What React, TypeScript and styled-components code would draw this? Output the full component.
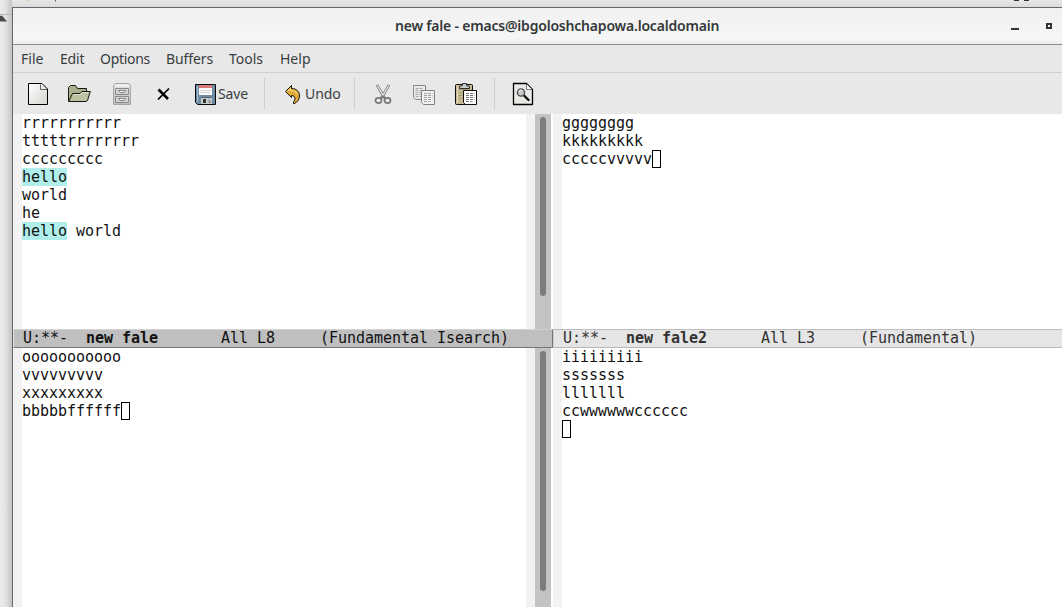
import React from 'react';
import styled, { createGlobalStyle } from 'styled-components';

const GlobalStyle = createGlobalStyle`
  html, body { margin: 0; padding: 0; overflow: hidden; background: #fff; }
  * { box-sizing: border-box; }
`;

const uiFont = `'Noto Sans', 'Open Sans', sans-serif`;
const monoFont = `'DejaVu Sans Mono', 'Liberation Mono', monospace`;

const Desktop = styled.div`
  display: flex;
  width: 1062px;
  height: 607px;
  overflow: hidden;
  background: #e7e7e7;
`;

const BackdropEdge = styled.div`
  flex: none;
  width: 12px;
  height: 607px;
  background: linear-gradient(90deg, #ebebeb 0, #e4e4e4 5px, #c4c4c4 12px);
`;

const EdgeTop = styled.div`
  height: 15px;
  border-bottom: 1px solid #b9b9b9;
`;

const EdgeArrow = styled.svg`
  display: block;
  width: 12px;
  height: 8px;
`;

const Main = styled.div`
  display: flex;
  flex-direction: column;
  flex: 1;
  min-width: 0;
`;

const BackdropTop = styled.div`
  display: flex;
  flex: none;
  height: 7px;
  background: linear-gradient(#e6e6e6, #dcdcdc);
`;

const TopMarks = styled.svg`
  display: block;
  width: 1050px;
  height: 7px;
`;

const Frame = styled.div`
  display: flex;
  flex-direction: column;
  flex: 1;
  min-height: 0;
  border-top: 1px solid #67676a;
  border-left: 1px solid #68686a;
`;

const TitleBar = styled.div`
  display: flex;
  flex: none;
  align-items: center;
  height: 37px;
  padding: 0 10px 0 382px;
  background: linear-gradient(#f1f1f2, #f6f6f6 85%, #ececec);
  border-bottom: 1px solid #8b8b8b;
`;

const Title = styled.div`
  width: 325px;
  font: 600 14px/20px ${uiFont};
  letter-spacing: -0.2px;
  color: #35393a;
  white-space: nowrap;
`;

const WindowButtons = styled.svg`
  width: 44px;
  height: 16px;
  margin-left: auto;
`;

const MenuBar = styled.div`
  display: flex;
  flex: none;
  height: 28px;
  padding-left: 8px;
  border-bottom: 1px solid #d0d0d0;
  background: #e8e8e8;
`;

const MenuItem = styled.div<{ $w: number; $ls?: number }>`
  flex: none;
  width: ${p => p.$w}px;
  font: 14px/28px ${uiFont};
  letter-spacing: ${p => p.$ls ?? 0}px;
  color: #393d3f;
  white-space: nowrap;
`;

const ToolBar = styled.div`
  display: flex;
  flex: none;
  align-items: center;
  height: 41px;
  padding-left: 4px;
  background: #e8e8e8;
`;

const ToolButton = styled.div<{ $w?: number; $indent?: number; $gap?: number }>`
  display: flex;
  flex: none;
  align-items: center;
  justify-content: ${p => (p.$indent ? 'flex-start' : 'center')};
  gap: ${p => p.$gap ?? 0}px;
  width: ${p => p.$w ?? 42}px;
  height: 41px;
  padding-left: ${p => p.$indent ?? 0}px;
  font: 14px/41px ${uiFont};
  letter-spacing: -0.1px;
  color: #393d3f;
`;

const Separator = styled.div`
  flex: none;
  width: 1px;
  height: 32px;
  background: #cfcfcf;
`;

const Icon = styled.svg`
  flex: none;
  width: 24px;
  height: 24px;
`;

const Panes = styled.div`
  display: flex;
  flex: 1;
  min-height: 0;
  background: #fff;
`;

const Column = styled.div<{ $w: number }>`
  display: flex;
  flex: none;
  flex-direction: column;
  width: ${p => p.$w}px;
`;

const Pane = styled.div<{ $h: number }>`
  display: flex;
  flex: none;
  height: ${p => p.$h}px;
  overflow: hidden;
`;

const Fringe = styled.div`
  flex: none;
  width: 9px;
  background: #f2f2f2;
`;

const Buffer = styled.div`
  flex: 1;
  min-width: 0;
  background: #fff;
`;

const Line = styled.div`
  display: flex;
  height: 18px;
  font: 15px/18px ${monoFont};
  letter-spacing: -0.03px;
  color: #111;
  white-space: pre;
`;

const Match = styled.span`
  background: #afeeea;
`;

const Cursor = styled.span`
  width: 9px;
  height: 18px;
  border: 1px solid #000;
`;

const ScrollTrack = styled.div`
  display: flex;
  flex: none;
  width: 18px;
  padding: 3px 5px 0 5px;
  background: #c3c3c3;
  border-right: 2px solid #fff;
`;

const ScrollThumb = styled.div<{ $h: number }>`
  width: 6px;
  height: ${p => p.$h}px;
  border-radius: 3px;
  background: #7c7c7c;
`;

const ModeLine = styled.div<{ $active?: boolean }>`
  flex: none;
  height: 19px;
  padding-left: 9px;
  font: 15px/17px ${monoFont};
  letter-spacing: -0.03px;
  white-space: pre;
  color: ${p => (p.$active ? '#111' : '#333')};
  background: ${p => (p.$active ? '#bfbfbf' : '#e5e5e5')};
  border-top: 1px solid ${p => (p.$active ? '#d2d2d2' : '#bdbdbd')};
  border-bottom: 1px solid ${p => (p.$active ? '#777' : '#b8b8b8')};
  border-left: 1px solid ${p => (p.$active ? '#dedede' : '#ccc')};
  border-right: ${p => (p.$active ? '1px solid #777' : '0')};
`;

const NewIcon = () => (
  <Icon viewBox="0 0 24 24">
    <defs>
      <linearGradient id="paper" x1="0" y1="0" x2="1" y2="1">
        <stop offset="0" stopColor="#fff" />
        <stop offset="1" stopColor="#d4d4d0" />
      </linearGradient>
    </defs>
    <path d="M2.500 1.500H16L21.500 7V22.500H2.500Z" fill="url(#paper)" stroke="#000" strokeLinejoin="round" />
    <path d="M14.500 2.500V7.500H21" fill="none" stroke="#666" />
  </Icon>
);

const OpenIcon = () => (
  <Icon viewBox="0 0 24 24">
    <path d="M1.500 19.500V5.500L3.500 3.500H8.500L10.500 6.500H19.500V10" fill="#aab08d" stroke="#16160f" />
    <path d="M1.700 19.500L5.500 11.500H13L15 9.500H23.300L20.500 18.500L19 19.500Z" fill="#bcc2a2" stroke="#16160f" strokeLinejoin="round" />
    <path d="M6.500 12.500H13.500L15.500 10.500H21.500" stroke="#e0e4ca" fill="none" />
  </Icon>
);

const CabinetIcon = () => (
  <Icon viewBox="0 0 24 24">
    <defs>
      <linearGradient id="steel" x1="0" y1="0" x2="0" y2="1">
        <stop offset="0" stopColor="#e6e6e6" />
        <stop offset="1" stopColor="#bdbdbd" />
      </linearGradient>
    </defs>
    <path d="M5 1.500H19L20.500 4V22.500H3.500V4Z" fill="url(#steel)" stroke="#a6a6a6" />
    <path d="M5 3.500H19" stroke="#f2f2f2" strokeWidth="2" />
    <path d="M5.500 6.500H18.500V12.500H5.500ZM5.500 14.500H18.500V20.500H5.500Z" fill="#d2d2d2" stroke="#8a8a8a" />
    <path d="M8.500 8.500H15.500L14 10.500H10ZM8.500 16.500H15.500L14 18.500H10Z" fill="#fafafa" stroke="#858585" />
  </Icon>
);

const CloseIcon = () => (
  <Icon viewBox="0 0 24 24">
    <path d="M6.500 7.500L16 17" stroke="#000" strokeWidth="2.600" />
    <path d="M17 6.500L6 17.500" stroke="#000" strokeWidth="1.700" />
  </Icon>
);

const SaveIcon = () => (
  <Icon viewBox="0 0 24 24">
    <path d="M2.500 2.500H22.500V22.500H4.500L2.500 20.500Z" fill="#6f8ca2" stroke="#05090c" />
    <path d="M4.500 4V20" stroke="#9dbdd4" />
    <rect x="6" y="3" width="13" height="10" fill="#fbfbfb" />
    <rect x="6" y="3" width="13" height="3" fill="#d9797b" />
    <path d="M7 8.500H18M7 10.500H18" stroke="#d5d5d5" />
    <rect x="8" y="16" width="11" height="6" fill="#c9cccd" />
    <rect x="8" y="15" width="11" height="1" fill="#50636f" />
    <rect x="10" y="17" width="3" height="4" fill="#333" />
    <path d="M15.500 16L18.500 21H15.500Z" fill="#8c9193" />
  </Icon>
);

const UndoIcon = () => (
  <Icon viewBox="0 0 24 24">
    <path d="M4.500 9.500L10.500 3.500V6.500C15.500 6.500 18.500 9.500 18.500 14C18.500 17.500 16 20.500 13.500 21.500H12.500V20C14.500 18 15 13.500 10.500 13.500V15.500Z" fill="#e0ab38" stroke="#17140c" strokeLinejoin="round" />
    <path d="M6.500 9.500L9.500 6.500V8.500C13 8.500 15.500 10 16.500 12.500" fill="none" stroke="#f9df8b" />
  </Icon>
);

const CutIcon = () => (
  <Icon viewBox="0 0 24 24">
    <path d="M6 3L13.500 16M18 3L10.500 16" stroke="#858585" strokeWidth="2.800" />
    <path d="M6.500 3.800L13 15M17.500 3.800L11 15" stroke="#ececec" strokeWidth="1.100" />
    <ellipse cx="7.500" cy="18.500" rx="3" ry="2.600" fill="#eee" stroke="#777" strokeWidth="1.700" />
    <ellipse cx="16.500" cy="18.500" rx="3" ry="2.600" fill="#eee" stroke="#777" strokeWidth="1.700" />
    <path d="M9.500 16.500L12 14L14.500 16.500" fill="none" stroke="#777" strokeWidth="1.500" />
  </Icon>
);

const CopyIcon = () => (
  <Icon viewBox="0 0 24 24">
    <path d="M1.500 3.500H13.500V17.500H3.500L1.500 15.500Z" fill="#eaeaea" stroke="#888" />
    <path d="M3.500 6.500H11.500M3.500 8.500H11.500M3.500 10.500H9M3.500 12.500H9M3.500 14.500H9" stroke="#aaa" strokeDasharray="3 1" />
    <path d="M9.500 8.500H22.500V22.500H11.500L9.500 20.500Z" fill="#f1f1f1" stroke="#808080" />
    <path d="M12 11.500H20.500M12 13.500H20.500M12 15.500H20.500M12 17.500H20.500M12 19.500H18.500" stroke="#a2a2a2" strokeDasharray="3 1" />
  </Icon>
);

const PasteIcon = () => (
  <Icon viewBox="0 0 24 24">
    <rect x="1.500" y="2.500" width="17" height="20" rx="1" fill="#c4b990" stroke="#0d0c08" />
    <path d="M3.500 4V21" stroke="#e4dcb8" />
    <path d="M5 7.500H16M5 10.500H9M5 13.500H9M5 16.500H9" stroke="#a59a72" />
    <path d="M5.500 6.500V4.500L8.500 3.500V1.500H12.500V3.500L15.500 4.500V6.500Z" fill="#c9cdce" stroke="#2c3033" />
    <path d="M9.500 8.500H22.500V22.500H11.500L9.500 20.500Z" fill="#fff" stroke="#0d0c08" />
    <path d="M12 11.500H20.500M12 13.500H20.500M12 15.500H20.500M12 17.500H20.500M12 19.500H18.500" stroke="#777" strokeDasharray="3 1" />
  </Icon>
);

const SearchIcon = () => (
  <Icon viewBox="0 0 24 24">
    <path d="M2.500 1.500H15.500L21.500 7.500V22.500H2.500Z" fill="#e9e9e6" stroke="#000" strokeWidth="1.300" strokeLinejoin="round" />
    <path d="M15.500 2V7.500H21" fill="#fff" stroke="#777" />
    <path d="M13 13.500L17.500 18" stroke="#111" strokeWidth="2.400" strokeLinecap="round" />
    <circle cx="10" cy="10.500" r="3.600" fill="#c8cac9" stroke="#4c4c4c" strokeWidth="1.400" />
    <path d="M8 10A2.300 2.300 0 0 1 10.500 8" fill="none" stroke="#fff" />
  </Icon>
);

function Text({ lines, cursorAt }: { lines: React.ReactNode[]; cursorAt?: number }) {
  return (
    <Buffer>
      {lines.map((l, i) => (
        <Line key={i}>
          {l}
          {cursorAt === i && <Cursor />}
        </Line>
      ))}
    </Buffer>
  );
}

export default function App() {
  return (
    <>
      <GlobalStyle />
      <Desktop>
        <BackdropEdge>
          <EdgeTop />
          <EdgeArrow viewBox="0 0 12 8">
            <path d="M0 1L2 .5L7 6.500H0Z" fill="#4b4b4b" />
          </EdgeArrow>
        </BackdropEdge>
        <Main>
          <BackdropTop>
            <TopMarks viewBox="0 0 1050 7">
              <path d="M14 .5H17" stroke="#d2d2b4" />
              <path d="M43.500 0V1.500" stroke="#555" />
              <path d="M1002 .5H1007M1012 .5H1017" stroke="#333" />
            </TopMarks>
          </BackdropTop>
          <Frame>
            <TitleBar>
              <Title>new fale - emacs@ibgoloshchapowa.localdomain</Title>
              <WindowButtons viewBox="0 0 44 16">
                <rect x="3" y="10" width="8" height="2" fill="#2e3436" />
                <rect x="39" y="6" width="4" height="4" fill="none" stroke="#2e3436" strokeWidth="2" />
              </WindowButtons>
            </TitleBar>
            <MenuBar>
              <MenuItem $w={39}>File</MenuItem>
              <MenuItem $w={40} $ls={-0.2}>Edit</MenuItem>
              <MenuItem $w={66} $ls={-0.3}>Options</MenuItem>
              <MenuItem $w={63} $ls={-0.1}>Buffers</MenuItem>
              <MenuItem $w={51}>Tools</MenuItem>
              <MenuItem $w={40}>Help</MenuItem>
            </MenuBar>
            <ToolBar>
              <ToolButton $w={41}><NewIcon /></ToolButton>
              <ToolButton><OpenIcon /></ToolButton>
              <ToolButton $w={43}><CabinetIcon /></ToolButton>
              <ToolButton $w={41}><CloseIcon /></ToolButton>
              <ToolButton $w={80} $indent={9} $gap={1}><SaveIcon />Save</ToolButton>
              <Separator />
              <ToolButton $w={89} $indent={16}><UndoIcon />Undo</ToolButton>
              <Separator />
              <ToolButton $w={55}><CutIcon /></ToolButton>
              <ToolButton $w={28}><CopyIcon /></ToolButton>
              <ToolButton $w={56}><PasteIcon /></ToolButton>
              <Separator />
              <ToolButton $w={56}><SearchIcon /></ToolButton>
            </ToolBar>
            <Panes>
              <Column $w={540}>
                <Pane $h={215}>
                  <Fringe />
                  <Text
                    lines={[
                      'rrrrrrrrrrr',
                      'tttttrrrrrrrr',
                      'ccccccccc',
                      <Match key="a">hello</Match>,
                      'world',
                      'he',
                      <React.Fragment key="b"><Match>hello</Match>{' world'}</React.Fragment>,
                    ]}
                  />
                  <Fringe />
                  <ScrollTrack><ScrollThumb $h={179} /></ScrollTrack>
                </Pane>
                <ModeLine $active>U:**-  <b>new fale</b>{'       All L8     (Fundamental Isearch)'}</ModeLine>
                <Pane $h={259}>
                  <Fringe />
                  <Text lines={['ooooooooooo', 'vvvvvvvvv', 'xxxxxxxxx', 'bbbbbffffff']} cursorAt={3} />
                  <Fringe />
                  <ScrollTrack><ScrollThumb $h={240} /></ScrollTrack>
                </Pane>
              </Column>
              <Column $w={509}>
                <Pane $h={215}>
                  <Fringe />
                  <Text lines={['gggggggg', 'kkkkkkkkk', 'cccccvvvvv']} cursorAt={2} />
                </Pane>
                <ModeLine>U:**-  <b>new fale2</b>{'      All L3     (Fundamental)'}</ModeLine>
                <Pane $h={259}>
                  <Fringe />
                  <Text lines={['iiiiiiiii', 'sssssss', 'lllllll', 'ccwwwwwwcccccc', '']} cursorAt={4} />
                </Pane>
              </Column>
            </Panes>
          </Frame>
        </Main>
      </Desktop>
    </>
  );
}
